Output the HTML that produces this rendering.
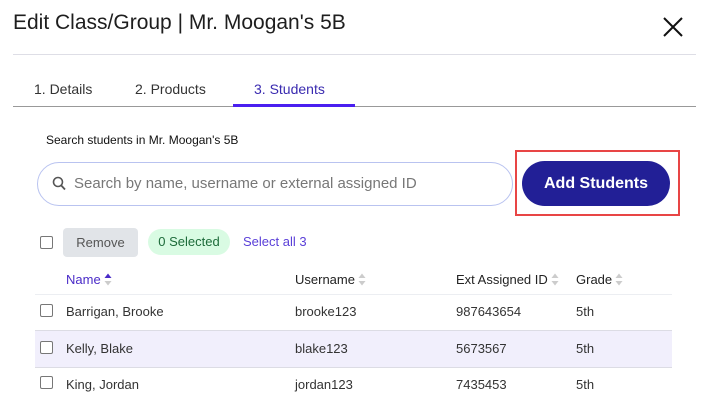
<!DOCTYPE html>
<html><head><style>
*{margin:0;padding:0;box-sizing:border-box}
body{width:704px;height:413px;background:#fff;font-family:"Liberation Sans",sans-serif;position:relative;overflow:hidden;color:#222}
.a{position:absolute;white-space:nowrap}
.cb{position:absolute;width:13px;height:13px;border:1.5px solid #777;border-radius:2px;background:#fff}
.td{font-size:13px;color:#333}
.sort{display:inline-block;width:8px;height:13px;vertical-align:-2px;margin-left:3px}
</style></head><body>
<div class="a" style="left:13px;top:11px;font-size:21px;color:#1e1e1e">Edit Class/Group | Mr. Moogan's 5B</div>
<svg class="a" style="left:662px;top:16px" width="22" height="22" viewBox="0 0 22 22"><path d="M2 2L20 20M20 2L2 20" stroke="#111" stroke-width="2"/></svg>
<div class="a" style="left:13px;top:54px;width:683px;height:1px;background:#dedee6"></div>
<div class="a" style="left:34px;top:81px;font-size:14px;color:#333">1. Details</div>
<div class="a" style="left:135px;top:81px;font-size:14px;color:#333">2. Products</div>
<div class="a" style="left:254px;top:81px;font-size:14px;color:#3a2bb0">3. Students</div>
<div class="a" style="left:13px;top:106px;width:683px;height:1px;background:#999"></div>
<div class="a" style="left:233px;top:104px;width:122px;height:3px;background:#4a1ff0"></div>
<div class="a" style="left:46px;top:133px;font-size:12px;color:#111">Search students in Mr. Moogan's 5B</div>
<div class="a" style="left:37px;top:162px;width:476px;height:44px;border:1px solid #b9c3f0;border-radius:22px"></div>
<svg class="a" style="left:52px;top:176px" width="14" height="15" viewBox="0 0 14 15"><circle cx="6" cy="6" r="4.5" stroke="#555" stroke-width="1.6" fill="none"/><path d="M9.3 9.5L13 13.5" stroke="#555" stroke-width="1.8"/></svg>
<div class="a" style="left:74px;top:175px;font-size:15px;color:#777">Search by name, username or external assigned ID</div>
<div class="a" style="left:515px;top:150px;width:165px;height:66px;border:2px solid #e84545"></div>
<div class="a" style="left:522px;top:161px;width:148px;height:45px;background:#221f96;border-radius:23px;color:#fff;font-weight:bold;font-size:16px;text-align:center;line-height:45px">Add Students</div>
<div class="cb" style="left:40px;top:236px"></div>
<div class="a" style="left:63px;top:228px;width:75px;height:29px;background:#e1e4e8;border-radius:4px;font-size:13px;color:#555;text-align:center;line-height:29px">Remove</div>
<div class="a" style="left:148px;top:229px;width:82px;height:26px;background:#d9fbe3;border-radius:13px;font-size:13px;color:#1d6b3a;text-align:center;line-height:26px">0 Selected</div>
<div class="a" style="left:243px;top:234px;font-size:13px;color:#5a3fd8">Select all 3</div>
<svg width="0" height="0" style="position:absolute"><defs><g id="s"><path d="M0.5 5L4 0.5L7.5 5Z" fill="#ccc"/><path d="M0.5 8L4 12.5L7.5 8Z" fill="#ccc"/></g></defs></svg>
<div class="a" style="left:66px;top:272px;font-size:13px;color:#4a2bc8">Name<svg class="sort" viewBox="0 0 8 13"><path d="M0.5 5L4 0.5L7.5 5Z" fill="#4a2bc8"/><path d="M0.5 8L4 12.5L7.5 8Z" fill="#ccc"/></svg></div>
<div class="a" style="left:295px;top:272px;font-size:13px;color:#222">Username<svg class="sort" viewBox="0 0 8 13"><use href="#s"/></svg></div>
<div class="a" style="left:456px;top:272px;font-size:13px;color:#222">Ext Assigned ID<svg class="sort" viewBox="0 0 8 13"><use href="#s"/></svg></div>
<div class="a" style="left:576px;top:272px;font-size:13px;color:#222">Grade<svg class="sort" viewBox="0 0 8 13"><use href="#s"/></svg></div>
<div class="a" style="left:35px;top:294px;width:637px;height:1px;background:#eceef2"></div>
<div class="a" style="left:35px;top:330px;width:637px;height:38px;background:#f1effc;border-top:1px solid #dcdce4;border-bottom:1px solid #dcdce4"></div>
<div class="cb" style="left:40px;top:304px"></div>
<div class="a td" style="left:66px;top:304px">Barrigan, Brooke</div><div class="a td" style="left:295px;top:304px">brooke123</div><div class="a td" style="left:456px;top:304px">987643654</div><div class="a td" style="left:576px;top:304px">5th</div>
<div class="cb" style="left:40px;top:341px"></div>
<div class="a td" style="left:66px;top:341px">Kelly, Blake</div><div class="a td" style="left:295px;top:341px">blake123</div><div class="a td" style="left:456px;top:341px">5673567</div><div class="a td" style="left:576px;top:341px">5th</div>
<div class="cb" style="left:40px;top:376px"></div>
<div class="a td" style="left:66px;top:377px">King, Jordan</div><div class="a td" style="left:295px;top:377px">jordan123</div><div class="a td" style="left:456px;top:377px">7435453</div><div class="a td" style="left:576px;top:377px">5th</div>
</body></html>
